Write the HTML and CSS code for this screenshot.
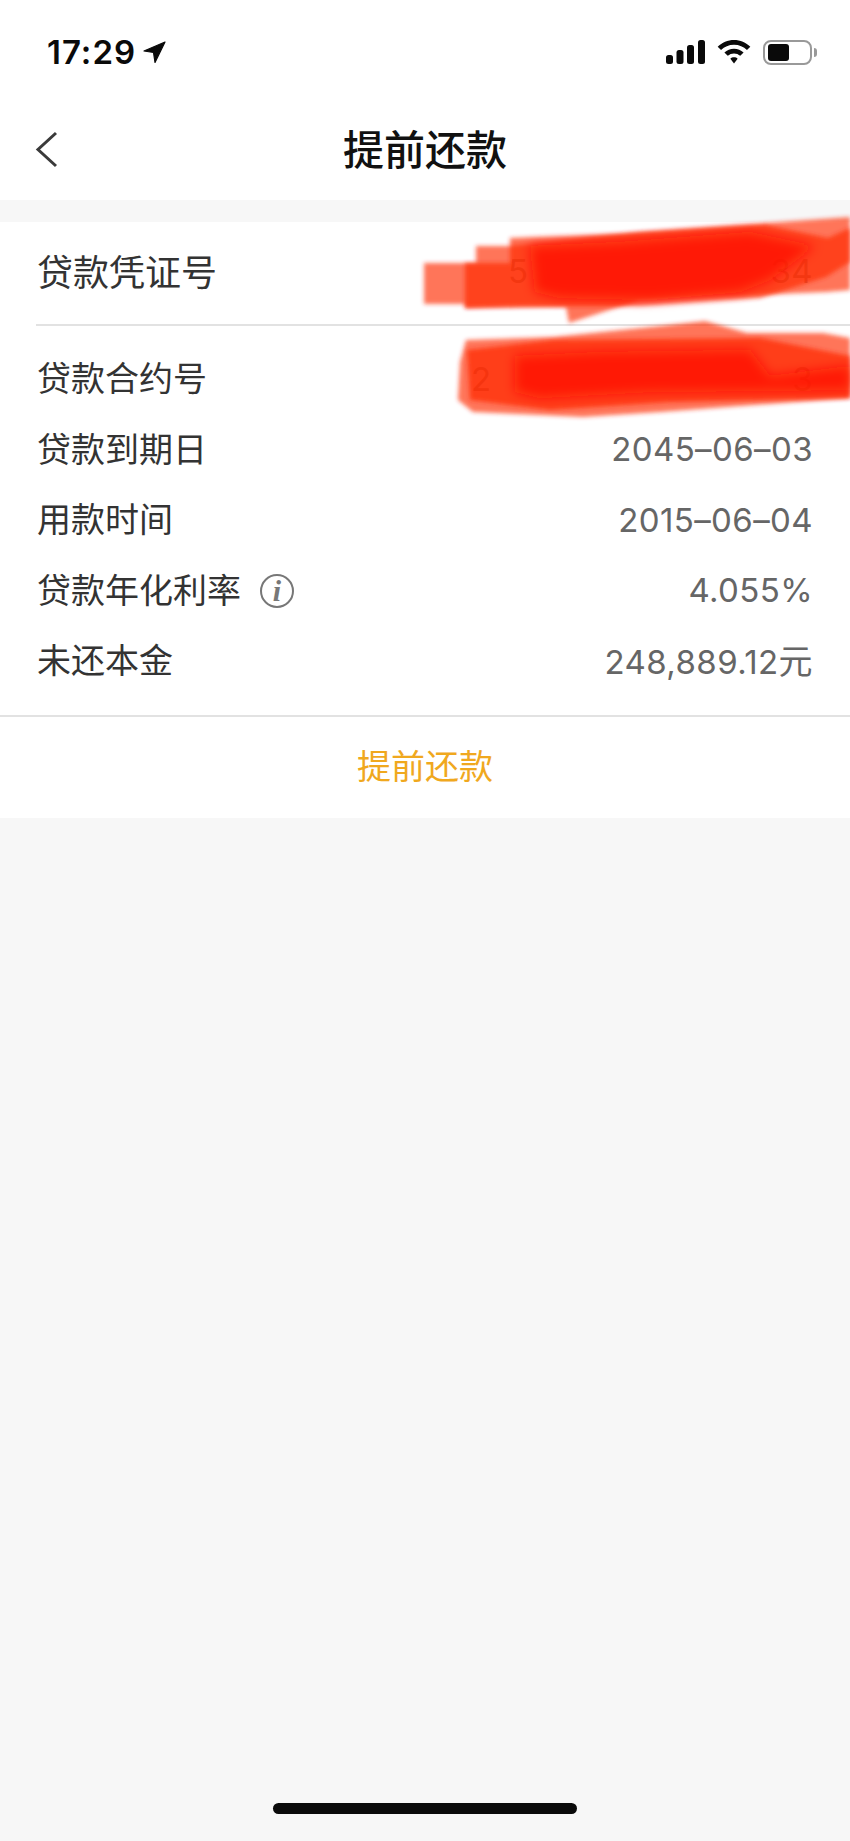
FILE: index.html
```html
<!DOCTYPE html>
<html lang="zh-CN">
<head>
  <meta charset="UTF-8">
  <title>提前还款</title>
  <link rel="stylesheet" href="styles.css">
</head>
<body>
  <div class="page">
    <!-- Status bar -->
    <div class="status-bar">
      <div class="status-left">
        <span class="clock">17:29</span>
        <svg class="location" width="24" height="24" viewBox="0 0 24 24"><path d="M22 2 L1 11 L10.500 12.500 L12 22.500 Z" fill="#0a0a0a" stroke="#0a0a0a" stroke-width="1.200" stroke-linejoin="round"/></svg>
      </div>
      <div class="status-right">
        <svg width="39" height="24" viewBox="0 0 39 24" fill="#0a0a0a">
          <rect x="0" y="15" width="7" height="9" rx="2.500"/>
          <rect x="10.500" y="10" width="7" height="14" rx="2.500"/>
          <rect x="21" y="5" width="7" height="19" rx="2.500"/>
          <rect x="32" y="0" width="7" height="24" rx="2.500"/>
        </svg>
        <svg width="34" height="24" viewBox="0 0 35 25" fill="#0a0a0a">
          <path d="M17.500 0 C24 0 30 2.600 34.500 7 L31 10.500 C27.500 7 22.800 5 17.500 5 C12.200 5 7.500 7 4 10.500 L0.500 7 C5 2.600 11 0 17.500 0 Z"/>
          <path d="M17.500 9 C21.300 9 24.800 10.500 27.500 13 L24 16.500 C22.200 14.900 20 14 17.500 14 C15 14 12.800 14.900 11 16.500 L7.500 13 C10.200 10.500 13.700 9 17.500 9 Z"/>
          <path d="M17.500 18 C19 18 20.300 18.500 21.300 19.500 L17.500 24.500 L13.700 19.500 C14.700 18.500 16 18 17.500 18 Z"/>
        </svg>
        <div class="battery-wrap">
          <div class="battery"><div class="battery-fill"></div></div>
          <div class="battery-cap"></div>
        </div>
      </div>
    </div>

    <!-- Nav bar -->
    <div class="nav-bar">
      <svg class="back" width="24" height="38" viewBox="0 0 24 38"><path d="M21 2 L3 18.500 L21 35" fill="none" stroke="#3a3a3a" stroke-width="3"/></svg>
      <div class="nav-title">提前还款</div>
    </div>

    <!-- Loan card -->
    <div class="card">
      <div class="row row-main">
        <span class="label-main">贷款凭证号</span>
        <span class="value masked masked-top"><span>5</span><span>34</span></span>
      </div>
      <div class="detail">
        <div class="row">
          <span class="label">贷款合约号</span>
          <span class="value masked masked-bottom"><span>2</span><span>3</span></span>
        </div>
        <div class="row">
          <span class="label">贷款到期日</span>
          <span class="value">2045–06–03</span>
        </div>
        <div class="row">
          <span class="label">用款时间</span>
          <span class="value">2015–06–04</span>
        </div>
        <div class="row">
          <span class="label">贷款年化利率<span class="info">i</span></span>
          <span class="value">4.055%</span>
        </div>
        <div class="row">
          <span class="label">未还本金</span>
          <span class="value">248,889.12<span class="unit">元</span></span>
        </div>
      </div>
      <div class="action">提前还款</div>

      <!-- Red scribbles painted over the account numbers (viewBox uses page coordinates) -->
      <svg class="scribble" width="850" height="220" viewBox="0 222 850 220">
        <defs>
          <filter id="soft" x="-5%" y="-20%" width="110%" height="140%"><feGaussianBlur stdDeviation="2.200"/></filter>
          <filter id="softer" x="-10%" y="-30%" width="120%" height="160%"><feGaussianBlur stdDeviation="6"/></filter>
        </defs>
        <!-- top scribble -->
        <path filter="url(#soft)" d="M424 263 H476 V246 H510 L640 232 L850 217 V290 L826 292 L640 300 L569 323 L566 307 L465 308 V304 H424 Z" fill="#ff2a00" fill-opacity="0.65"/>
        <path filter="url(#soft)" d="M465 263 L510 263 L510 238 L620 234 L750 226 L765 225 L828 238 L850 228 V262 L826 277 L760 298 L640 306 L520 306 L465 308 Z" fill="#ff2a00" fill-opacity="0.68"/>
        <path filter="url(#softer)" d="M530 246 L620 242 L750 232 L815 246 L770 280 L740 292 L650 300 L560 298 L535 292 Z" fill="#ff1400" fill-opacity="0.8"/>
        <!-- bottom scribble -->
        <path filter="url(#soft)" d="M466 340 L553 337 L660 326 L705 321 L747 333 L823 333 L850 338 V398 L660 412 L583 417 L473 412 L458 400 L460 362 Z" fill="#ff2a00" fill-opacity="0.65"/>
        <path filter="url(#soft)" d="M467 350 L553 340 L760 338 L850 356 V398 L670 402 L550 410 L470 400 Z" fill="#ff2a00" fill-opacity="0.72"/>
        <path filter="url(#softer)" d="M515 356 L600 352 L750 350 L770 376 L850 366 V390 L650 392 L540 398 L515 392 Z" fill="#ff1400" fill-opacity="0.8"/>
      </svg>
    </div>

    <div class="home-area">
      <div class="home-indicator"></div>
    </div>
  </div>
</body>
</html>
```

FILE: styles.css
```css
/* Reset default styles */
* {
  margin: 0;
  padding: 0;
  box-sizing: border-box;
}
body {
  font-family: "Noto Sans CJK SC", "Liberation Sans", sans-serif;
  background: #f7f7f7;
}
.page {
  width: 850px;
  height: 1841px;
  display: flex;
  flex-direction: column;
  overflow: hidden;
}
/* Status bar */
.status-bar {
  height: 100px;
  background: #fff;
  display: flex;
  justify-content: space-between;
  align-items: center;
  padding: 4px 33px 0 47px;
}
.status-left {
  display: flex;
  align-items: center;
  gap: 7px;
}
.clock {
  font-family: Inter, sans-serif;
  font-size: 33px;
  font-weight: 600;
  letter-spacing: 1px;
  line-height: 1;
  color: #0a0a0a;
}
.status-right {
  display: flex;
  align-items: center;
  gap: 12px;
}
.battery-wrap {
  display: flex;
  align-items: center;
  gap: 2px;
}
.battery {
  width: 49px;
  height: 25px;
  border: 2px solid #999;
  border-radius: 8px;
  padding: 0 3px;
  display: flex;
  align-items: center;
}
.battery-fill {
  width: 21px;
  height: 17px;
  background: #0a0a0a;
  border-radius: 3px;
}
.battery-cap {
  width: 3px;
  height: 9px;
  background: #999;
  border-radius: 0 3px 3px 0;
}
/* Nav bar */
.nav-bar {
  height: 100px;
  background: #fff;
  display: flex;
  align-items: center;
  justify-content: center;
  padding-bottom: 6px;
  position: relative;
}
.back {
  position: absolute;
  left: 35px;
  top: 31px;
}
.nav-title {
  font-size: 41px;
  font-weight: 500;
  line-height: 1;
  color: #111;
}
/* Loan card */
.card {
  margin-top: 22px;
  background: #fff;
  position: relative;
}
.row {
  height: 70.500px;
  display: flex;
  justify-content: space-between;
  align-items: center;
  padding: 0 37px;
}
.row-main {
  height: 102px;
  padding-bottom: 3px;
}
.label-main {
  font-size: 36px;
  line-height: 1;
  padding-bottom: 4px;
  color: #333;
}
.label {
  font-size: 34px;
  line-height: 1;
  padding-bottom: 4px;
  color: #333;
  display: flex;
  align-items: center;
  gap: 19px;
}
.info {
  width: 34px;
  height: 34px;
  margin-bottom: -4px;
  border: 2px solid #777;
  border-radius: 50%;
  display: flex;
  align-items: center;
  justify-content: center;
  font-family: "Liberation Serif", serif;
  font-style: italic;
  font-weight: 700;
  font-size: 30px;
  color: #777;
}
.value {
  font-family: Inter, "Noto Sans CJK SC", sans-serif;
  font-size: 33px;
  letter-spacing: 0.4px;
  line-height: 1;
  color: #666;
}
.unit {
  font-family: "Noto Sans CJK SC", sans-serif;
  font-size: 34px;
}
.masked {
  display: flex;
  justify-content: space-between;
  color: #999;
}
.masked-top {
  width: 305px;
}
.masked-bottom {
  width: 342px;
}
.detail {
  margin-left: 36px;
  border-top: 2px solid #e2e2e2;
  padding: 18px 0;
}
.detail .row {
  padding-left: 1px;
}
.action {
  height: 103.500px;
  border-top: 2px solid #e2e2e2;
  display: flex;
  align-items: center;
  justify-content: center;
  padding-bottom: 4px;
  font-size: 34px;
  line-height: 1;
  color: #f0a81e;
}
.scribble {
  position: absolute;
  left: 0;
  top: 0;
  overflow: visible;
}
/* Home indicator */
.home-area {
  flex: 1;
  display: flex;
  align-items: flex-end;
  justify-content: center;
  padding-bottom: 27px;
}
.home-indicator {
  width: 304px;
  height: 11px;
  background: #0a0a0a;
  border-radius: 6px;
}
```
